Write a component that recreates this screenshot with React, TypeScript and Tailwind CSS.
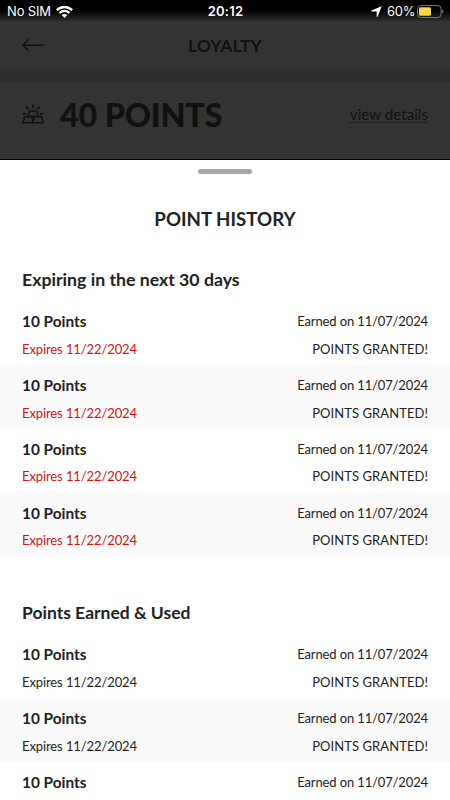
import React from 'react';

interface PointEntry {
  id: number;
  points: number;
  expires: string;
  earned: string;
  note: string;
}

const makeEntries = (count: number): PointEntry[] =>
  Array.from({ length: count }, (_, id) => ({
    id,
    points: 10,
    expires: '11/22/2024',
    earned: '11/07/2024',
    note: 'POINTS GRANTED!'
  }));

const expiring = makeEntries(4);
const history = makeEntries(3);

const StatusBar: React.FC = () => (
  <div className="h-[21px] shrink-0 bg-gradient-to-b from-black from-20% to-[#2c2c2c] grid grid-cols-3 items-center pl-[7px] pr-[6px] pt-[2px] font-['Inter','Liberation_Sans',sans-serif] text-[13px] leading-none text-white">
    <div className="flex items-center">
      <span className="w-[44px] whitespace-nowrap tracking-[-0.15px]">No SIM</span>
      <svg className="ml-[5px] w-[17px] h-[12px]" viewBox="0 0 17 12" fill="none">
        <path d="M.9 4.1a10.8 10.8 0 0 1 15.2 0" stroke="white" strokeWidth="2.5" />
        <path d="M3.5 7a7.1 7.1 0 0 1 10 0" stroke="white" strokeWidth="2.2" />
        <path d="M8.5 11.9 5.7 9.1a3.9 3.9 0 0 1 5.6 0z" fill="white" />
      </svg>
    </div>
    <span className="text-center font-semibold tracking-[0.2px]">20:12</span>
    <div className="flex items-center justify-end">
      <svg className="w-[11px] h-[11px]" viewBox="0 0 11 11" fill="white">
        <path d="M10.7.3 6.6 10.7H5.7V5.4H.3v-.9z" />
      </svg>
      <span className="ml-[5px] w-[28px] whitespace-nowrap tracking-[-0.2px]">60%</span>
      <svg className="ml-[2px] w-[27px] h-[13px]" viewBox="0 0 27 13" fill="none">
        <rect x=".5" y=".5" width="23.5" height="12" rx="3.2" stroke="#777" />
        <rect x="2" y="2.2" width="12" height="8.6" rx="1.5" fill="#fad748" />
        <path d="M25.2 4.5c1.8.6 1.8 3.4 0 4z" fill="#777" />
      </svg>
    </div>
  </div>
);

const GoldBars: React.FC = () => (
  <svg
    className="w-[22px] h-[21px]"
    viewBox="0 0 22 21"
    fill="none"
    stroke="#111111"
    strokeWidth="1.6"
    strokeLinejoin="round"
    strokeLinecap="round"
  >
    <path d="M7.7 7h6.6l1.8 5.2H5.9z" />
    <path d="M2.5 12.7h7.2l1.6 6H.9z" />
    <path d="M12.3 12.7h7.2l1.6 6H10.7z" />
    <path d="M11 .9v2.4M4.5 3.1l1.8 1.9M17.5 3.1l-1.8 1.9M1.5 9.9h2.1M18.4 9.9h2.1" strokeWidth="1.7" />
  </svg>
);

interface PointRowProps {
  entry: PointEntry;
  warn?: boolean;
  collapsed?: boolean;
}

const PointRow: React.FC<PointRowProps> = ({ entry, warn, collapsed }) => (
  <li className={`${collapsed ? 'h-[38px]' : 'h-[63.8px]'} px-[22px] pt-[7px] even:bg-[#fafafa] text-[13px] leading-[27.6px] text-[#222222]`}>
    <div className="flex justify-between">
      <span className="text-[15.4px] font-bold">{entry.points} Points</span>
      <span className="tracking-[-0.13px]">Earned on {entry.earned}</span>
    </div>
    {!collapsed && (
      <div className="flex justify-between">
        <span className={`tracking-[-0.1px] ${warn ? 'text-[#cc1414]' : ''}`}>Expires {entry.expires}</span>
        <span className="tracking-[0.07px]">{entry.note}</span>
      </div>
    )}
  </li>
);

export default function App() {
  return (
    <div className="w-[450px] h-[800px] overflow-hidden flex flex-col bg-white text-[#222222] font-['Lato','Liberation_Sans',sans-serif]">
      <StatusBar />

      {/* Dimmed page behind the sheet */}
      <header className="h-[48px] shrink-0 bg-[#333333] grid grid-cols-[1fr_auto_1fr] items-center px-[22px] text-[#111111]">
        <svg className="w-[22px] h-[12px]" viewBox="0 0 22 12" fill="none" stroke="#111111" strokeWidth="1.5">
          <path d="M6.5.5 1 6.2l5.5 5.3M1 6.2h20.5" />
        </svg>
        <h1 className="pt-[2px] text-[17.6px] leading-none font-bold">LOYALTY</h1>
      </header>
      <div className="h-[12px] shrink-0 bg-[#2e2e2e]" />
      <section className="h-[79px] shrink-0 bg-[#333333] border-b border-black flex items-center px-[22px] pb-[12px] text-[#111111]">
        <GoldBars />
        <span className="ml-[16px] pt-[2px] text-[32.4px] leading-none font-black tracking-[-0.2px]">40 POINTS</span>
        <a href="#details" className="ml-auto pt-px text-[15.2px] underline decoration-[#222222] decoration-1 underline-offset-2">view details</a>
      </section>

      {/* Sheet */}
      <main>
        <div className="mx-auto mt-[9px] w-[54px] h-[5px] rounded-full bg-[#a6a6a6]" />
        <h2 className="mt-[33px] text-center text-[18.7px] leading-[24px] font-bold">POINT HISTORY</h2>
        <h3 className="mt-[37px] px-[22px] text-[17.7px] leading-[24px] font-bold">Expiring in the next 30 days</h3>
        <ul className="mt-[9.3px]">
          {expiring.map(entry => (
            <PointRow key={entry.id} entry={entry} warn />
          ))}
        </ul>
        <h3 className="mt-[45px] px-[22px] text-[17.5px] leading-[24px] font-bold">Points Earned &amp; Used</h3>
        <ul className="mt-[9px]">
          {history.map((entry, index) => (
            <PointRow key={entry.id} entry={entry} collapsed={index === history.length - 1} />
          ))}
        </ul>
      </main>
    </div>
  );
}
